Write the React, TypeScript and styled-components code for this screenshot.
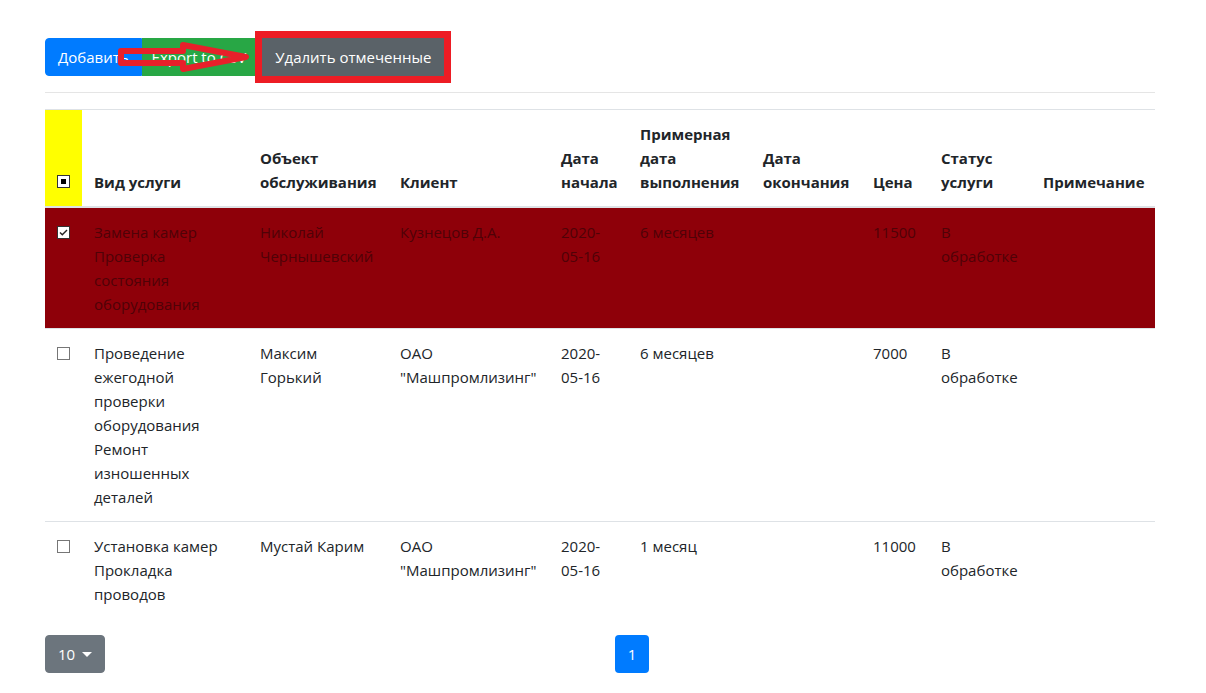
import React from "react"
import styled, { createGlobalStyle, css } from "styled-components"

const GlobalStyle = createGlobalStyle`
  body {
    margin: 0;
    background: #fff;
    color: #212529;
    font-family: "Open Sans", "Noto Sans", "Liberation Sans", sans-serif;
    font-size: 15px;
    line-height: 24px;
  }
  * {
    box-sizing: border-box;
  }
`

const Page = styled.div`
  width: 1110px;
  margin-left: 45px;
  padding-top: 38px;
`

const Toolbar = styled.div`
  position: relative;
  display: flex;
  height: 38px;
`

type Variant = "primary" | "success" | "secondary"

const colors: Record<Variant, string> = {
  primary: "#007bff",
  success: "#28a745",
  secondary: "#5a6268",
}

const Button = styled.button<{ $variant: Variant; $first?: boolean; $pad?: number }>`
  height: 38px;
  padding: 0 ${(p) => p.$pad ?? 12}px;
  border: 1px solid ${(p) => colors[p.$variant]};
  background: ${(p) => colors[p.$variant]};
  color: #fff;
  font: inherit;
  line-height: 24px;
  border-radius: ${(p) => (p.$first ? "4px 0 0 4px" : "0")};
`

const Marked = styled.div`
  position: relative;
  display: flex;
  margin-left: 6px;
`

const Frame = styled.span`
  position: absolute;
  inset: -7px;
  border: 7px solid #ed1c24;
  pointer-events: none;
`

const Arrow = styled.svg`
  position: absolute;
  left: 70px;
  top: 0;
  overflow: visible;
`

const Divider = styled.hr`
  margin: 16px 0;
  border: 0;
  border-top: 1px solid rgba(0, 0, 0, 0.1);
`

const Table = styled.table`
  width: 100%;
  table-layout: fixed;
  border-collapse: collapse;
`

const HeadCell = styled.th<{ $mark?: boolean }>`
  padding: 12px;
  text-align: left;
  vertical-align: bottom;
  font-weight: 700;
  border-top: 1px solid #dee2e6;
  border-bottom: 2px solid #dee2e6;
  ${(p) =>
    p.$mark &&
    css`
      background: #ffff00;
    `}
`

const Row = styled.tr<{ $selected?: boolean }>`
  ${(p) =>
    p.$selected &&
    css`
      background: #8e0009;
      color: #4f0207;
    `}
`

const Cell = styled.td<{ $first?: boolean }>`
  padding: 12px;
  vertical-align: top;
  border-top: ${(p) => (p.$first ? "0" : "1px solid #dee2e6")};
`

type BoxState = "off" | "on" | "mixed"

const Box = styled.span<{ $state: BoxState }>`
  position: relative;
  display: inline-block;
  width: 13px;
  height: 13px;
  margin-top: 6px;
  border: 1px solid ${(p) => (p.$state === "off" ? "#767676" : "#333")};
  background: #fff;
  ${(p) =>
    p.$state === "mixed" &&
    css`
      &::after {
        content: "";
        position: absolute;
        left: 3px;
        top: 3px;
        width: 5px;
        height: 5px;
        background: #000;
      }
    `}
`

const CheckMark = styled.svg`
  position: absolute;
  left: 0;
  top: 0;
`

const Check = () => (
  <CheckMark width="11" height="11" viewBox="0 0 11 11">
    <path d="M2 5.5 L4.3 7.8 L9 3" fill="none" stroke="#222" strokeWidth="1.4" />
  </CheckMark>
)

const Footer = styled.div`
  display: grid;
  grid-template-columns: 570px auto 1fr;
  align-items: center;
  margin-top: 17px;
`

const SizeButton = styled.button`
  justify-self: start;
  display: flex;
  align-items: center;
  gap: 7px;
  height: 38px;
  padding: 0 12px;
  border: 1px solid #6c757d;
  border-radius: 4px;
  background: #6c757d;
  color: #fff;
  font: inherit;

  &::after {
    content: "";
    border-top: 5px solid #fff;
    border-left: 5px solid transparent;
    border-right: 5px solid transparent;
  }
`

const PageLink = styled.span`
  display: block;
  width: 34px;
  height: 38px;
  line-height: 38px;
  text-align: center;
  border-radius: 4px;
  background: #007bff;
  color: #fff;
`

const columns = [37, 166, 140, 161, 79, 123, 110, 68, 102, 124]

const headers = [
  "Вид услуги",
  "Объект обслуживания",
  "Клиент",
  "Дата начала",
  "Примерная дата выполнения",
  "Дата окончания",
  "Цена",
  "Статус услуги",
  "Примечание",
]

type Service = {
  selected: boolean
  cells: string[]
}

const rows: Service[] = [
  {
    selected: true,
    cells: [
      "Замена камер Проверка состояния оборудования",
      "Николай Чернышевский",
      "Кузнецов Д.А.",
      "2020-05-16",
      "6 месяцев",
      "",
      "11500",
      "В обработке",
      "",
    ],
  },
  {
    selected: false,
    cells: [
      "Проведение ежегодной проверки оборудования Ремонт изношенных деталей",
      "Максим Горький",
      'ОАО "Машпромлизинг"',
      "2020-05-16",
      "6 месяцев",
      "",
      "7000",
      "В обработке",
      "",
    ],
  },
  {
    selected: false,
    cells: [
      "Установка камер Прокладка проводов",
      "Мустай Карим",
      'ОАО "Машпромлизинг"',
      "2020-05-16",
      "1 месяц",
      "",
      "11000",
      "В обработке",
      "",
    ],
  },
]

export default function App() {
  return (
    <>
      <GlobalStyle />
      <Page>
        <Toolbar>
          <Button $variant="primary" $first>
            Добавить
          </Button>
          <Button $variant="success" $pad={9}>
            Export to CSV
          </Button>
          <Marked>
            <Button $variant="secondary">Удалить отмеченные</Button>
            <Frame />
          </Marked>
          <Arrow width="140" height="40" viewBox="0 0 140 40">
            <polygon
              points="6,13 68,13 68,7 131,19 68,31 68,25 6,25"
              fill="none"
              stroke="#e8202a"
              strokeWidth="6"
              strokeLinejoin="round"
            />
          </Arrow>
        </Toolbar>
        <Divider />
        <Table>
          <colgroup>
            {columns.map((w, i) => (
              <col key={i} style={{ width: w }} />
            ))}
          </colgroup>
          <thead>
            <tr>
              <HeadCell $mark>
                <Box $state="mixed" />
              </HeadCell>
              {headers.map((h) => (
                <HeadCell key={h}>{h}</HeadCell>
              ))}
            </tr>
          </thead>
          <tbody>
            {rows.map((r, i) => (
              <Row key={i} $selected={r.selected}>
                <Cell $first={i === 0}>
                  <Box $state={r.selected ? "on" : "off"}>{r.selected && <Check />}</Box>
                </Cell>
                {r.cells.map((c, j) => (
                  <Cell key={j} $first={i === 0}>
                    {c}
                  </Cell>
                ))}
              </Row>
            ))}
          </tbody>
        </Table>
        <Footer>
          <SizeButton>10</SizeButton>
          <PageLink>1</PageLink>
        </Footer>
      </Page>
    </>
  )
}
